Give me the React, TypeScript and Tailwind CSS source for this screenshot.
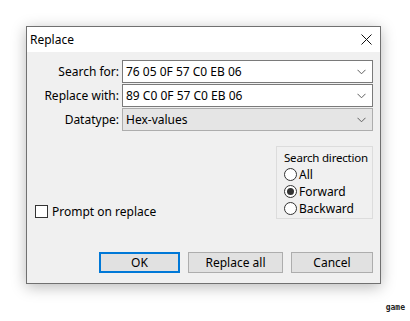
import React from "react";

function Chevron() {
  return (
    <svg width="9" height="6" viewBox="0 0 9 6" className="shrink-0">
      <path d="M0.5 0.8 L4.5 4.8 L8.5 0.8" fill="none" stroke="#606060" strokeWidth="1" />
    </svg>
  );
}

function Combo({ value, gray }: { value: string; gray?: boolean }) {
  return (
    <div
      className={
        "w-[251px] h-[23px] flex items-center justify-between pl-[3px] pr-[6px] border " +
        (gray ? "bg-[#e5e5e5] border-[#adadad]" : "bg-white border-[#7a7a7a]")
      }
    >
      <span className="text-[12px] leading-none text-black">{value}</span>
      <Chevron />
    </div>
  );
}

function Radio({ label, checked }: { label: string; checked?: boolean }) {
  return (
    <div className="flex items-center h-[17px] whitespace-nowrap">
      <div className="w-[13px] h-[13px] shrink-0 rounded-full border border-[#333] bg-white flex items-center justify-center">
        {checked && <div className="w-[7px] h-[7px] rounded-full bg-[#333]" />}
      </div>
      <span className="ml-[2px] text-[12px] leading-none">{label}</span>
    </div>
  );
}

function Btn({ label, w, primary }: { label: string; w: string; primary?: boolean }) {
  return (
    <div
      className={
        w +
        " h-[21px] flex items-center justify-center bg-[#e1e1e1] text-[12px] leading-none " +
        (primary ? "border-2 border-[#0078d7]" : "border border-[#adadad]")
      }
    >
      {label}
    </div>
  );
}

export default function App() {
  return (
    <div
      className="w-[410px] h-[321px] bg-white overflow-hidden text-black"
      style={{ fontFamily: '"Noto Sans", "Open Sans", sans-serif' }}
    >
      <div className="pt-[26px] pl-[26px]">
        <div className="w-[355px] h-[258px] border border-[#707070] bg-[#f0f0f0] flex flex-col shadow-[0_3px_14px_rgba(0,0,0,0.28)]">
          {/* title bar */}
          <div className="h-[25px] bg-white flex items-center justify-between pl-[3px] pr-[8px]">
            <span className="text-[12px] leading-none">Replace</span>
            <svg width="11" height="11" viewBox="0 0 11 11">
              <path d="M0.5 0.5 L10.5 10.5 M10.5 0.5 L0.5 10.5" stroke="#111" strokeWidth="1" />
            </svg>
          </div>
          {/* body */}
          <div className="flex flex-col pt-[8px] pr-[7px]">
            <div className="flex flex-col gap-[1px]">
              {[
                { l: "Search for:", v: "76 05 0F 57 C0 EB 06" },
                { l: "Replace with:", v: "89 C0 0F 57 C0 EB 06" },
                { l: "Datatype:", v: "Hex-values", g: true },
              ].map((r) => (
                <div key={r.l} className="flex items-center">
                  <div className="w-[92px] text-right text-[12px] leading-none whitespace-nowrap">{r.l}</div>
                  <div className="ml-[3px]">
                    <Combo value={r.v} gray={r.g} />
                  </div>
                </div>
              ))}
            </div>
            <div className="flex items-end justify-between mt-[15px]">
              <div className="flex items-center pl-[8px] mb-[1px]">
                <div className="w-[13px] h-[13px] border border-[#333] bg-white" />
                <span className="ml-[4px] text-[12px] leading-none">Prompt on replace</span>
              </div>
              <div className="w-[97px] h-[73px] border border-[#dcdcdc] pl-[7px] pt-[3px] flex flex-col">
                <div className="text-[11.5px] leading-[15px] mb-[1px] whitespace-nowrap tracking-[-0.2px]">Search direction</div>
                <Radio label="All" />
                <Radio label="Forward" checked />
                <Radio label="Backward" />
              </div>
            </div>
            <div className="flex justify-end gap-[8px] mt-[33px]">
              <Btn label="OK" w="w-[81px]" primary />
              <Btn label="Replace all" w="w-[95px]" />
              <Btn label="Cancel" w="w-[82px]" />
            </div>
          </div>
        </div>
      </div>
      <div className="flex justify-end pr-[5px] mt-[20px]">
        <span className="text-[8px] leading-none font-bold text-[#222]" style={{ fontFamily: '"DejaVu Sans Mono", monospace' }}>
          game
        </span>
      </div>
    </div>
  );
}
